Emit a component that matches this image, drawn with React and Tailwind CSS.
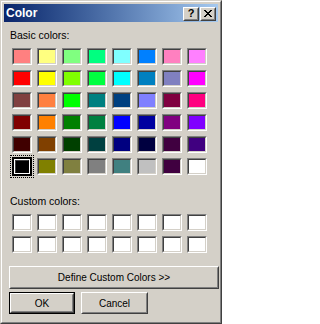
import React from "react";

const basic = [
  ["bg-[#ff8080]", "bg-[#ffff80]", "bg-[#80ff80]", "bg-[#00ff80]", "bg-[#80ffff]", "bg-[#0080ff]", "bg-[#ff80c0]", "bg-[#ff80ff]"],
  ["bg-[#ff0000]", "bg-[#ffff00]", "bg-[#80ff00]", "bg-[#00ff40]", "bg-[#00ffff]", "bg-[#0080c0]", "bg-[#8080c0]", "bg-[#ff00ff]"],
  ["bg-[#804040]", "bg-[#ff8040]", "bg-[#00ff00]", "bg-[#008080]", "bg-[#004080]", "bg-[#8080ff]", "bg-[#800040]", "bg-[#ff0080]"],
  ["bg-[#800000]", "bg-[#ff8000]", "bg-[#008000]", "bg-[#008040]", "bg-[#0000ff]", "bg-[#0000a0]", "bg-[#800080]", "bg-[#8000ff]"],
  ["bg-[#400000]", "bg-[#804000]", "bg-[#004000]", "bg-[#004040]", "bg-[#000080]", "bg-[#000040]", "bg-[#400040]", "bg-[#400080]"],
  ["bg-[#000000]", "bg-[#808000]", "bg-[#808040]", "bg-[#808080]", "bg-[#408080]", "bg-[#c0c0c0]", "bg-[#400040]", "bg-[#ffffff]"],
];

function Swatch({ color, selected = false }) {
  return (
    <div className="relative w-[20px] h-[17px]">
      <div className="w-full h-full border border-t-[#808080] border-l-[#808080] border-b-white border-r-white">
        <div className={`w-full h-full border border-t-[#404040] border-l-[#404040] border-b-[#d4d0c8] border-r-[#d4d0c8] ${color}`} />
      </div>
      {selected && (
        <>
          <div className="absolute -left-[2px] -right-[2px] -top-[3px] -bottom-[3px] border border-dotted border-black" />
          <div className="absolute left-0 right-0 -top-[1px] -bottom-[1px] border-2 border-black">
            <div className="w-full h-full border border-white">
              <div className="w-full h-full bg-black border border-t-[#404040] border-l-[#404040] border-b-black border-r-black" />
            </div>
          </div>
        </>
      )}
    </div>
  );
}

function Button({ children, isDefault = false, className = "" }) {
  return (
    <div className={`${className} ${isDefault ? "border border-black" : ""}`}>
      <div className="w-full h-full border border-t-white border-l-white border-b-[#404040] border-r-[#404040]">
        <div className="w-full h-full flex items-center justify-center border border-t-[#d4d0c8] border-l-[#d4d0c8] border-b-[#808080] border-r-[#808080] text-[10px] text-black">
          {children}
        </div>
      </div>
    </div>
  );
}

function TitleButton({ children }) {
  return (
    <div className="w-[16px] h-[14px] border border-t-white border-l-white border-b-[#404040] border-r-[#404040] bg-[#d4d0c8]">
      <div className="w-full h-full flex items-center justify-center border border-t-[#d4d0c8] border-l-[#d4d0c8] border-b-[#808080] border-r-[#808080]">
        {children}
      </div>
    </div>
  );
}

export default function App() {
  return (
    <div className="w-[222px] h-[324px] border border-t-[#d4d0c8] border-l-[#d4d0c8] border-b-[#404040] border-r-[#404040] font-['Liberation_Sans',Arial,sans-serif] select-none">
      <div className="w-full h-full border border-t-white border-l-white border-b-[#808080] border-r-[#808080] bg-[#d4d0c8] p-[2px] flex flex-col">
        {/* title bar */}
        <div className="h-[18px] flex items-center bg-linear-to-r from-[#0a246a] to-[#a6caf0] pl-[2px] pr-[2px]">
          <span className="text-white font-bold text-[12px] leading-[14px]">Color</span>
          <div className="ml-auto flex gap-[1px] pt-[1px]">
            <TitleButton>
              <span className="text-black font-bold text-[11px] leading-none">?</span>
            </TitleButton>
            <TitleButton>
              <svg width="8" height="7" viewBox="0 0 8 7" shapeRendering="crispEdges">
                <path d="M0 0h2v1h-2zM6 0h2v1h-2zM1 1h2v1h-2zM5 1h2v1h-2zM2 2h4v1h-4zM3 3h2v1h-2zM2 4h4v1h-4zM1 5h2v1h-2zM5 5h2v1h-2zM0 6h2v1h-2zM6 6h2v1h-2z" fill="#000" />
              </svg>
            </TitleButton>
          </div>
        </div>

        <div className="flex flex-col px-[5px]">
          <div className="mt-[7px] pl-[1px] text-[10.5px] leading-[13px] text-black">Basic colors:</div>
          <div className="mt-[6px] pl-[3px] grid grid-cols-[repeat(8,20px)] gap-[5px]">
            {basic.map((row, r) =>
              row.map((c, i) => <Swatch key={`${r}-${i}`} color={c} selected={r === 5 && i === 0} />)
            )}
          </div>

          <div className="mt-[20px] pl-[1px] text-[10.5px] leading-[13px] text-black">Custom colors:</div>
          <div className="mt-[6px] pl-[3px] grid grid-cols-[repeat(8,20px)] gap-[5px]">
            {Array.from({ length: 16 }).map((_, i) => (
              <Swatch key={i} color="bg-white" />
            ))}
          </div>

          <Button className="mt-[13px] w-[210px] h-[23px]">Define Custom Colors &gt;&gt;</Button>
          <div className="mt-[3px] flex gap-[6px]">
            <Button isDefault className="w-[66px] h-[22px]">OK</Button>
            <Button className="w-[67px] h-[22px]">Cancel</Button>
          </div>
        </div>
      </div>
    </div>
  );
}
